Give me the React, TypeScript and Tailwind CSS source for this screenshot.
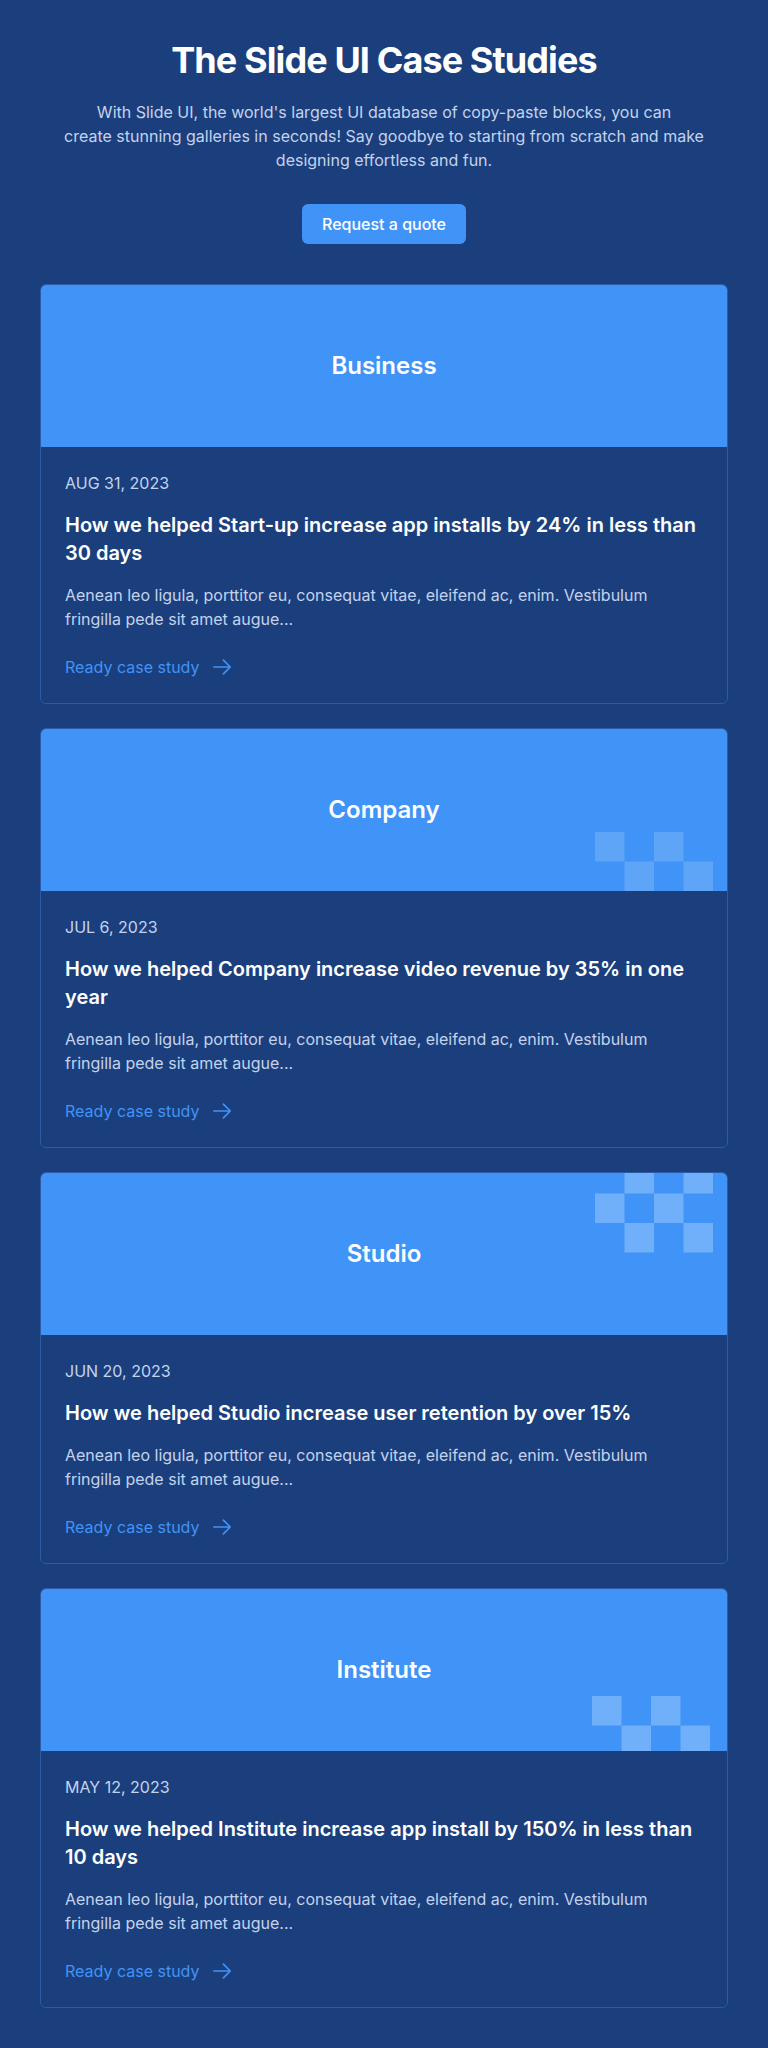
type Pattern = {
    rows: number[][];
    top?: number;
    bottom?: number;
    right: number;
    opacity: number;
};

type CaseStudy = {
    label: string;
    date: string;
    title: string;
    pattern?: Pattern;
};

const CELL = 29.5;

const studies: CaseStudy[] = [
    {
        label: "Business",
        date: "AUG 31, 2023",
        title: "How we helped Start-up increase app installs by 24% in less than 30 days"
    },
    {
        label: "Company",
        date: "JUL 6, 2023",
        title: "How we helped Company increase video revenue by 35% in one year",
        pattern: { rows: [[0, 2], [1, 3]], bottom: 0, right: 14, opacity: 0.16 }
    },
    {
        label: "Studio",
        date: "JUN 20, 2023",
        title: "How we helped Studio increase user retention by over 15%",
        pattern: { rows: [[1, 3], [0, 2], [1, 3]], top: -9, right: 14, opacity: 0.25 }
    },
    {
        label: "Institute",
        date: "MAY 12, 2023",
        title: "How we helped Institute increase app install by 150% in less than 10 days",
        pattern: { rows: [[0, 2], [1, 3]], bottom: -4, right: 17, opacity: 0.25 }
    }
];

// checker squares in the corner of a card header
function Squares({ pattern }: { pattern: Pattern }) {
    const w = CELL * 4;
    const h = CELL * pattern.rows.length;
    return (
        <svg
            width={w}
            height={h}
            viewBox={`0 0 ${w} ${h}`}
            className="absolute"
            style={{ right: pattern.right, top: pattern.top, bottom: pattern.bottom }}
        >
            {pattern.rows.map((cols, r) =>
                cols.map(c => (
                    <rect
                        key={`${r}-${c}`}
                        x={c * CELL}
                        y={r * CELL}
                        width={CELL}
                        height={CELL}
                        fill="#ffffff"
                        fillOpacity={pattern.opacity}
                    />
                ))
            )}
        </svg>
    );
}

function ArrowRight() {
    return (
        <svg width="22" height="22" viewBox="0 0 24 24" fill="none" stroke="currentColor" strokeWidth="1.8" strokeLinecap="round" strokeLinejoin="round">
            <path d="M13.5 4.5 21 12m0 0-7.5 7.5M21 12H3" />
        </svg>
    );
}

function StudyCard({ study }: { study: CaseStudy }) {
    return (
        <div className="overflow-hidden rounded-md border border-[#2c5aa5] bg-[#1b3f7c]">
            <div className="relative flex h-[162px] items-center justify-center overflow-hidden bg-[#4094f7]">
                {study.pattern && <Squares pattern={study.pattern} />}
                <h3 className="relative text-2xl font-semibold text-white">{study.label}</h3>
            </div>
            <div className="p-6">
                <p className="text-base leading-6 text-[#c3d3ef]">{study.date}</p>
                <h4 className="mt-4 text-xl leading-7 font-semibold text-white">{study.title}</h4>
                <p className="mt-4 text-base leading-6 text-[#c3d3ef]">
                    Aenean leo ligula, porttitor eu, consequat vitae, eleifend ac, enim. Vestibulum fringilla pede sit amet augue...
                </p>
                <a href="#" className="mt-6 flex items-center gap-3 text-base leading-6 text-[#4094f7]">
                    <span>Ready case study</span>
                    <ArrowRight />
                </a>
            </div>
        </div>
    );
}

export default function App() {
    return (
        <div className="min-h-screen bg-[#1b3f7c] px-10 pt-10 pb-10 font-['Inter',sans-serif]">
            <div className="flex flex-col items-center text-center">
                <h1 className="text-4xl leading-10 font-bold tracking-tight text-white">The Slide UI Case Studies</h1>
                <p className="mt-5 max-w-[660px] text-base leading-6 text-[#c3d3ef]">
                    With Slide UI, the world's largest UI database of copy-paste blocks, you can
                    <br />
                    create stunning galleries in seconds! Say goodbye to starting from scratch and make designing effortless and fun.
                </p>
                <button className="mt-8 rounded-md bg-[#4094f7] px-5 py-2 text-base leading-6 font-medium text-white">
                    Request a quote
                </button>
            </div>
            <div className="mt-10 flex flex-col gap-6">
                {studies.map(study => (
                    <StudyCard key={study.label} study={study} />
                ))}
            </div>
        </div>
    );
}
